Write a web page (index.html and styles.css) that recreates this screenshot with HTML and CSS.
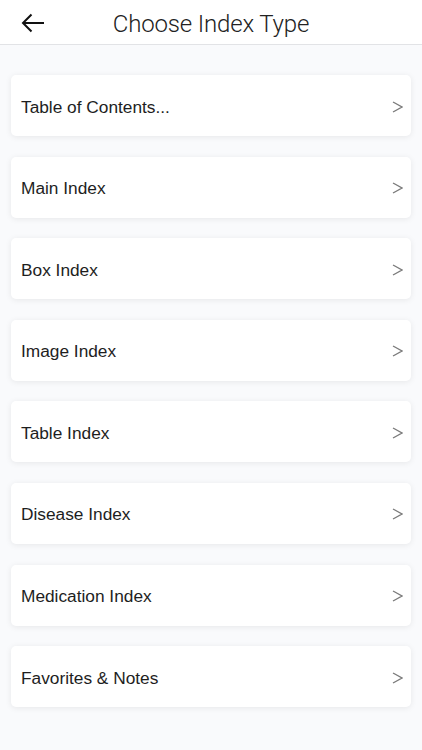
FILE: index.html
```html
<!DOCTYPE html>
<html>
<head>
<meta charset="utf-8">
<link rel="stylesheet" href="styles.css">
</head>
<body>
<header class="topbar">
  <svg class="back" width="24" height="20" viewBox="0 0 24 20"><path d="M23 10H2M10.5 1.5L2 10l8.5 8.5" fill="none" stroke="#111" stroke-width="2"/></svg>
  <h1 class="title">Choose Index Type</h1>
</header>
<main class="list">
  <div class="card"><span class="label">Table of Contents...</span><svg class="chev" width="11" height="12" viewBox="0 0 11 12"><path d="M1 1l9 5-9 5" fill="none" stroke="#7a7a7a" stroke-width="1.3"/></svg></div>
  <div class="card"><span class="label">Main Index</span><svg class="chev" width="11" height="12" viewBox="0 0 11 12"><path d="M1 1l9 5-9 5" fill="none" stroke="#7a7a7a" stroke-width="1.3"/></svg></div>
  <div class="card"><span class="label">Box Index</span><svg class="chev" width="11" height="12" viewBox="0 0 11 12"><path d="M1 1l9 5-9 5" fill="none" stroke="#7a7a7a" stroke-width="1.3"/></svg></div>
  <div class="card"><span class="label">Image Index</span><svg class="chev" width="11" height="12" viewBox="0 0 11 12"><path d="M1 1l9 5-9 5" fill="none" stroke="#7a7a7a" stroke-width="1.3"/></svg></div>
  <div class="card"><span class="label">Table Index</span><svg class="chev" width="11" height="12" viewBox="0 0 11 12"><path d="M1 1l9 5-9 5" fill="none" stroke="#7a7a7a" stroke-width="1.3"/></svg></div>
  <div class="card"><span class="label">Disease Index</span><svg class="chev" width="11" height="12" viewBox="0 0 11 12"><path d="M1 1l9 5-9 5" fill="none" stroke="#7a7a7a" stroke-width="1.3"/></svg></div>
  <div class="card"><span class="label">Medication Index</span><svg class="chev" width="11" height="12" viewBox="0 0 11 12"><path d="M1 1l9 5-9 5" fill="none" stroke="#7a7a7a" stroke-width="1.3"/></svg></div>
  <div class="card"><span class="label">Favorites &amp; Notes</span><svg class="chev" width="11" height="12" viewBox="0 0 11 12"><path d="M1 1l9 5-9 5" fill="none" stroke="#7a7a7a" stroke-width="1.3"/></svg></div>
</main>
</body>
</html>
```

FILE: styles.css
```css
html, body { margin: 0; padding: 0; }
body {
  width: 422px;
  height: 750px;
  background: #f9fafc;
  font-family: "Liberation Sans", Arial, sans-serif;
  overflow: hidden;
}
.topbar {
  height: 45px;
  background: #fff;
  border-bottom: 1px solid #e2e3e6;
  display: flex;
  align-items: center;
  position: relative;
  box-sizing: border-box;
}
.back { position: absolute; left: 21px; top: 13px; }
.title {
  margin: 0;
  width: 100%;
  text-align: center;
  font-family: Roboto, "Liberation Sans", sans-serif;
  font-weight: 300;
  font-size: 24px;
  color: #222;
  letter-spacing: -0.15px;
  padding-top: 3px;
}
.list {
  padding: 30px 11px 0;
  display: flex;
  flex-direction: column;
  gap: 20.6px;
}
.card {
  height: 61px;
  background: #fff;
  border-radius: 5px;
  box-shadow: 0 1px 6px rgba(0,0,0,0.08);
  display: flex;
  align-items: center;
  justify-content: space-between;
  padding: 0 8px 0 10px;
  font-size: 17.3px;
  color: #1e1e1e;
}
.label {
  padding-top: 3px;
}
.chev {
  margin-top: 2px;
}
```
